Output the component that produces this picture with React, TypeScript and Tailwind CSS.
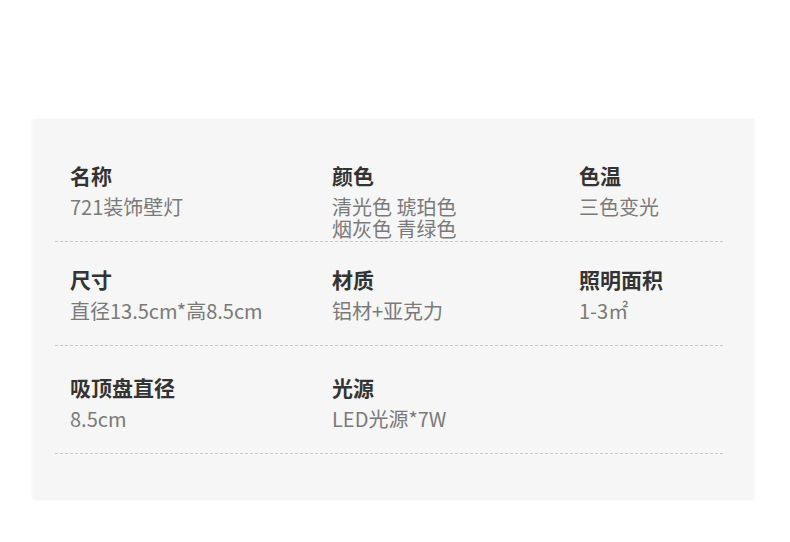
const rows = [
  [
    { label: "名称", value: ["721装饰壁灯"] },
    { label: "颜色", value: ["清光色 琥珀色", "烟灰色 青绿色"] },
    { label: "色温", value: ["三色变光"] },
  ],
  [
    { label: "尺寸", value: ["直径13.5cm*高8.5cm"] },
    { label: "材质", value: ["铝材+亚克力"] },
    { label: "照明面积", value: ["1-3㎡"] },
  ],
  [
    { label: "吸顶盘直径", value: ["8.5cm"] },
    { label: "光源", value: ["LED光源*7W"] },
  ],
];

export default function App() {
  return (
    <div
      className="w-[790px] h-[542px] bg-white pt-[119px] pl-[33px]"
      style={{ fontFamily: '"Noto Sans CJK SC", "Noto Sans", sans-serif' }}
    >
      <div className="w-[721px] h-[379px] bg-[#f6f6f6] shadow-[0_1px_3px_rgba(0,0,0,0.08)] pt-[45px] pl-[22px] pr-[31px]">
        {rows.map((row, i) => (
          <div
            key={i}
            className={
              "h-[78px] border-b border-dashed border-[#c8c8c8] grid grid-cols-[262px_247px_1fr] pl-[15px] " +
              (i === 0 ? "" : i === 1 ? "mt-[26px]" : "mt-[30px]")
            }
          >
            {row.map((c) => (
              <div key={c.label}>
                <div className="text-[21px] leading-[22px] font-bold text-[#333] mb-[10px]">
                  {c.label}
                </div>
                {c.value.map((v) => (
                  <div key={v} className="text-[20px] leading-[22px] text-[#7a7a7a]">
                    {v}
                  </div>
                ))}
              </div>
            ))}
          </div>
        ))}
      </div>
    </div>
  );
}
